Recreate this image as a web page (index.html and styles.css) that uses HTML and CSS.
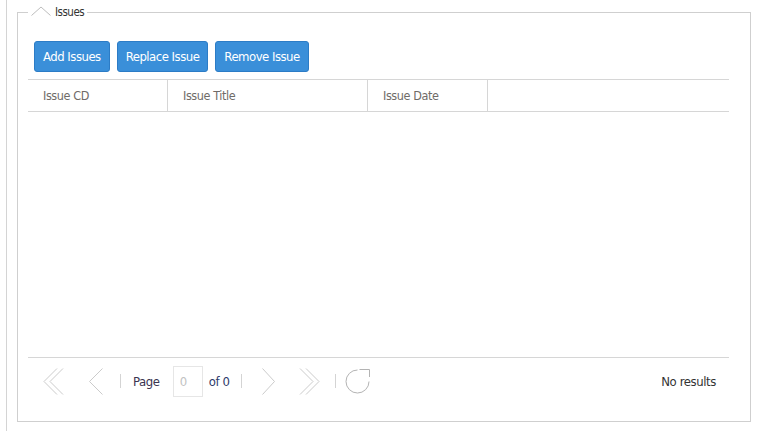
FILE: index.html
```html
<!DOCTYPE html>
<html lang="en">
<head>
<meta charset="UTF-8" />
<title>Issues</title>
<link rel="stylesheet" href="styles.css">
</head>
<body>
  <div class="wrap">
    <fieldset class="panel">
      <legend class="panel-title">
        <svg class="collapse-icon" width="20" height="10" viewBox="0 0 20 10" aria-hidden="true">
          <polyline points="0.5,9.5 10,1 19.5,9.5" />
        </svg>
        <span>Issues</span>
      </legend>

      <div class="toolbar">
        <button type="button" class="btn">Add Issues</button>
        <button type="button" class="btn">Replace Issue</button>
        <button type="button" class="btn">Remove Issue</button>
      </div>

      <div class="grid">
        <div class="grid-head">
          <div class="col">Issue CD</div>
          <div class="col">Issue Title</div>
          <div class="col">Issue Date</div>
          <div class="col last"></div>
        </div>
        <div class="grid-body">
          <!-- rows go here -->
        </div>
        <div class="pager">
          <span class="pg-btn pg-first">
            <svg width="21" height="27" viewBox="0 0 21 27"><polyline points="14,0.5 1,13.5 14,26.5" /><polyline points="20,0.5 7,13.5 20,26.5" /></svg>
          </span>
          <span class="pg-btn pg-prev">
            <svg width="14" height="27" viewBox="0 0 14 27"><polyline points="13.5,0.5 0.5,13.5 13.5,26.5" /></svg>
          </span>
          <span class="pg-sep sep-1"></span>
          <span class="pg-label">Page</span>
          <input class="pg-input" type="text" value="0" disabled />
          <span class="pg-total">of 0</span>
          <span class="pg-sep sep-2"></span>
          <span class="pg-btn pg-next">
            <svg width="13" height="27" viewBox="0 0 13 27"><polyline points="0.5,0.5 12.5,13.5 0.5,26.5" /></svg>
          </span>
          <span class="pg-btn pg-last">
            <svg width="21" height="27" viewBox="0 0 21 27"><polyline points="1,0.5 14,13.5 1,26.5" /><polyline points="7,0.5 20,13.5 7,26.5" /></svg>
          </span>
          <span class="pg-sep sep-3"></span>
          <span class="pg-btn pg-refresh">
            <svg width="26" height="26" viewBox="0 0 26 26"><path d="M12.5 2 A11.5 11.5 0 1 0 24 13.5" /><polyline points="14.5,1.5 24.5,1.5 24.5,9" /></svg>
          </span>
          <span class="pg-info">No results</span>
        </div>
      </div>
    </fieldset>
  </div>
</body>
</html>
```

FILE: styles.css
```css
/* Base */
*, *::before, *::after {
  box-sizing: border-box;
}
html, body {
  margin: 0;
  background: #fff;
  font-family: 'DejaVu Sans Condensed', 'Liberation Sans', sans-serif;
  font-size: 13px;
  letter-spacing: -0.4px;
  color: #333;
}

.wrap {
  margin-left: 6px;
  height: 431px;
  border-left: 1px solid #d4d4d4;
  padding: 4px 0 0 10px;
  overflow: hidden;
}

/* Panel */
.panel {
  margin: 0 6px 0 0;
  padding: 0 21px 17px 10px;
  border: 1px solid #cfcfcf;
  min-width: 0;
}
.panel-title {
  margin-left: 0;
  padding: 0 3px;
  height: 16px;
  display: flex;
  align-items: center;
  font-size: 11.5px;
  letter-spacing: -0.5px;
  color: #333;
}
.collapse-icon {
  flex-shrink: 0;
  margin-right: 4px;
  margin-top: -2px;
  fill: none;
  stroke: #bdbdbd;
  stroke-width: 1;
}

/* Toolbar */
.toolbar {
  display: flex;
  gap: 7px;
  margin: 21px 0 7px 6px;
}
.btn {
  height: 31px;
  padding: 0 8px;
  font-family: inherit;
  font-size: 13px;
  letter-spacing: -0.5px;
  color: #fff;
  background: #3a8fd9;
  border: 1px solid #2c7cc6;
  border-radius: 3px;
  cursor: pointer;
}
.btn:hover {
  background: #2f80c8;
}

/* Grid */
.grid-head {
  display: grid;
  grid-template-columns: 140px 200px 120px 1fr;
  height: 33px;
  border-top: 1px solid #d6d6d6;
  border-bottom: 1px solid #d6d6d6;
}
.col {
  display: flex;
  align-items: center;
  padding-left: 15px;
  border-right: 1px solid #d6d6d6;
  color: #6f6b68;
  font-size: 12.5px;
}
.col.last {
  border-right: none;
}
.grid-body {
  height: 246px;
  border-bottom: 1px solid #d6d6d6;
}

/* Pager */
.pager {
  display: flex;
  align-items: center;
  height: 46px;
  padding: 0 13px 0 15px;
}
.pg-btn {
  display: flex;
}
.pg-btn svg {
  fill: none;
  stroke: #cbcbcb;
  stroke-width: 1;
}
.pg-refresh svg {
  stroke: #b3b3b3;
}
.pg-prev { margin-left: 25px; }
.pg-sep {
  width: 1px;
  height: 14px;
  background: #d4d4d4;
}
.sep-1 { margin-left: 17px; }
.sep-2 { margin-left: 11px; }
.sep-3 { margin-left: 15px; }
.pg-label {
  margin-left: 12px;
  color: #3a3450;
}
.pg-input {
  margin-left: 13px;
  width: 30px;
  height: 31px;
  padding: 0 0 0 6px;
  border: 1px solid #e6e6e6;
  background: #fff;
  font-family: inherit;
  font-size: 13px;
  color: #c2c2c2;
}
.pg-total {
  margin-left: 6px;
  color: #2e3a6a;
}
.pg-next { margin-left: 20px; }
.pg-last { margin-left: 24px; }
.pg-refresh { margin-left: 9px; }
.pg-info {
  margin-left: auto;
  color: #333;
}
```
